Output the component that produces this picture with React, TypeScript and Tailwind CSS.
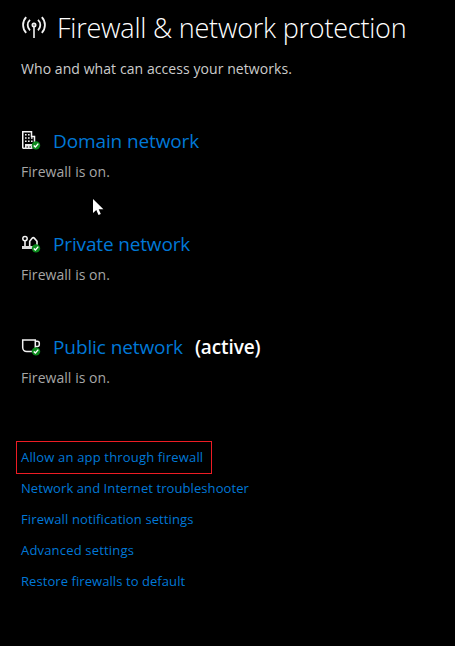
import React from "react";

function Check() {
  return (
    <g>
      <circle cx="15" cy="14.4" r="4.2" fill="#0b8a1c" />
      <path d="M12.8 14.4l1.6 1.6 2.9-3.4" fill="none" stroke="#fff" strokeWidth="1.4" />
    </g>
  );
}

function Domain() {
  return (
    <svg width="20" height="20" viewBox="0 0 20 20" className="mt-0.5 shrink-0">
      <path d="M1.75 17.5V.75H10.5V5.5h3v6M2 17.3h9" fill="none" stroke="#f2f2f2" strokeWidth="1.5" />
      <path d="M4 13h7.5v5H10v-2.5H8.5V18H7v-2.5H5.5V18H4z" fill="#e6e6e6" />
      <path d="M4 3h1.6v1.6H4zM7 3h1.6v1.6H7zM4 6.2h1.6v1.6H4zM7 6.2h1.6v1.6H7zM10 6.2h1.6v1.6H10zM4 9.5h1.6v1.6H4zM7 9.5h1.6v1.6H7zM10 9.5h1.6v1.6H10z" fill="#f2f2f2" />
      <Check />
    </svg>
  );
}

function Private() {
  return (
    <svg width="20" height="20" viewBox="0 0 20 20" className="mt-0.5 shrink-0">
      <circle cx="4" cy="4.6" r="2.2" fill="none" stroke="#f2f2f2" strokeWidth="1.5" />
      <path d="M4 6.8V13M8.7 13V7.2l2.6-3.1q1-1 2 0L16 7.2V11" fill="none" stroke="#f2f2f2" strokeWidth="1.6" />
      <path d="M1 12h11v3H1z" fill="#dcdcdc" />
      <Check />
    </svg>
  );
}

function Public() {
  return (
    <svg width="20" height="20" viewBox="0 0 20 20" className="mt-0.5 shrink-0">
      <path d="M1.7 2.9h12.6v7.7a4 4 0 0 1-4 4H5.7a4 4 0 0 1-4-4zM14.3 4.2h2a2 2 0 0 1 2 2v1.3a2 2 0 0 1-2 2h-2" fill="none" stroke="#f2f2f2" strokeWidth="1.5" />
      <Check />
    </svg>
  );
}

function Broadcast() {
  return (
    <svg width="26" height="24" viewBox="0 0 26 24" className="mt-px shrink-0">
      <g fill="none" stroke="#f2f2f2" strokeWidth="1.8">
        <path d="M5.2 1.2a11.3 11.3 0 0 0 0 15.6M20.8 1.2a11.3 11.3 0 0 1 0 15.6" />
        <path d="M9 3.9a7 7 0 0 0 0 10.4M17 3.9a7 7 0 0 1 0 10.4" />
        <circle cx="13" cy="9" r="1.6" />
        <path d="M13 10.8V22" strokeWidth="1.6" />
      </g>
    </svg>
  );
}

const networks = [
  { name: "Domain network", icon: <Domain />, active: false, spacing: "tracking-[-0.12px]" },
  { name: "Private network", icon: <Private />, active: false, spacing: "tracking-[-0.15px]" },
  { name: "Public network", icon: <Public />, active: true, spacing: "tracking-[-0.1px]" },
];

const links = [
  { label: "Network and Internet troubleshooter", spacing: "tracking-[0.08px]" },
  { label: "Firewall notification settings", spacing: "tracking-[0.12px]" },
  { label: "Advanced settings", spacing: "tracking-[0.18px]" },
  { label: "Restore firewalls to default", spacing: "tracking-[0.07px]" },
];

export default function App() {
  return (
    <main className="relative h-[646px] w-[455px] overflow-hidden whitespace-nowrap bg-black pl-[21px] pt-[7px] font-['Open_Sans','Noto_Sans',sans-serif]">
      <header>
        <div className="flex h-10 items-center">
          <Broadcast />
          <h1 className="ml-2.5 pt-0.5 text-[27px] font-[350] leading-[42px] tracking-[-0.23px] text-white">Firewall &amp; network protection</h1>
        </div>
        <p className="mt-3 text-sm leading-5 tracking-[0.07px] text-[#cccccc]">Who and what can access your networks.</p>
      </header>

      <div className="mt-[47px] flex flex-col gap-[47px]">
        {networks.map((n) => (
          <section key={n.name}>
            <div className="flex h-7 items-center">
              {n.icon}
              <h2 className={`ml-3 pt-px text-[19px] leading-[30px] text-[#0078d7] ${n.spacing}`}>{n.name}</h2>
              {n.active && (
                <span className="ml-3 pt-px text-[19px] font-semibold leading-[30px] tracking-[-0.1px] text-white">(active)</span>
              )}
            </div>
            <p className="mt-2 text-sm leading-5 tracking-[0.05px] text-[#a6a6a6]">Firewall is on.</p>
          </section>
        ))}
      </div>

      <nav className="mt-[53px] flex flex-col items-start text-[13px] leading-[31px] text-[#0078d7]">
        <a className="-mb-px -ml-[5px] w-[196px] border border-[#ed1c24] pl-1 tracking-[0.17px]">Allow an app through firewall</a>
        {links.map((l) => (
          <a key={l.label} className={l.spacing}>{l.label}</a>
        ))}
      </nav>

      <svg width="12" height="19" viewBox="0 0 12 19" className="absolute left-[93px] top-[198px]">
        <path d="M0 1v14l3.3-3 2.2 5 2.3-1.1-2.1-4.6h4.7z" fill="#fff" />
      </svg>
    </main>
  );
}
